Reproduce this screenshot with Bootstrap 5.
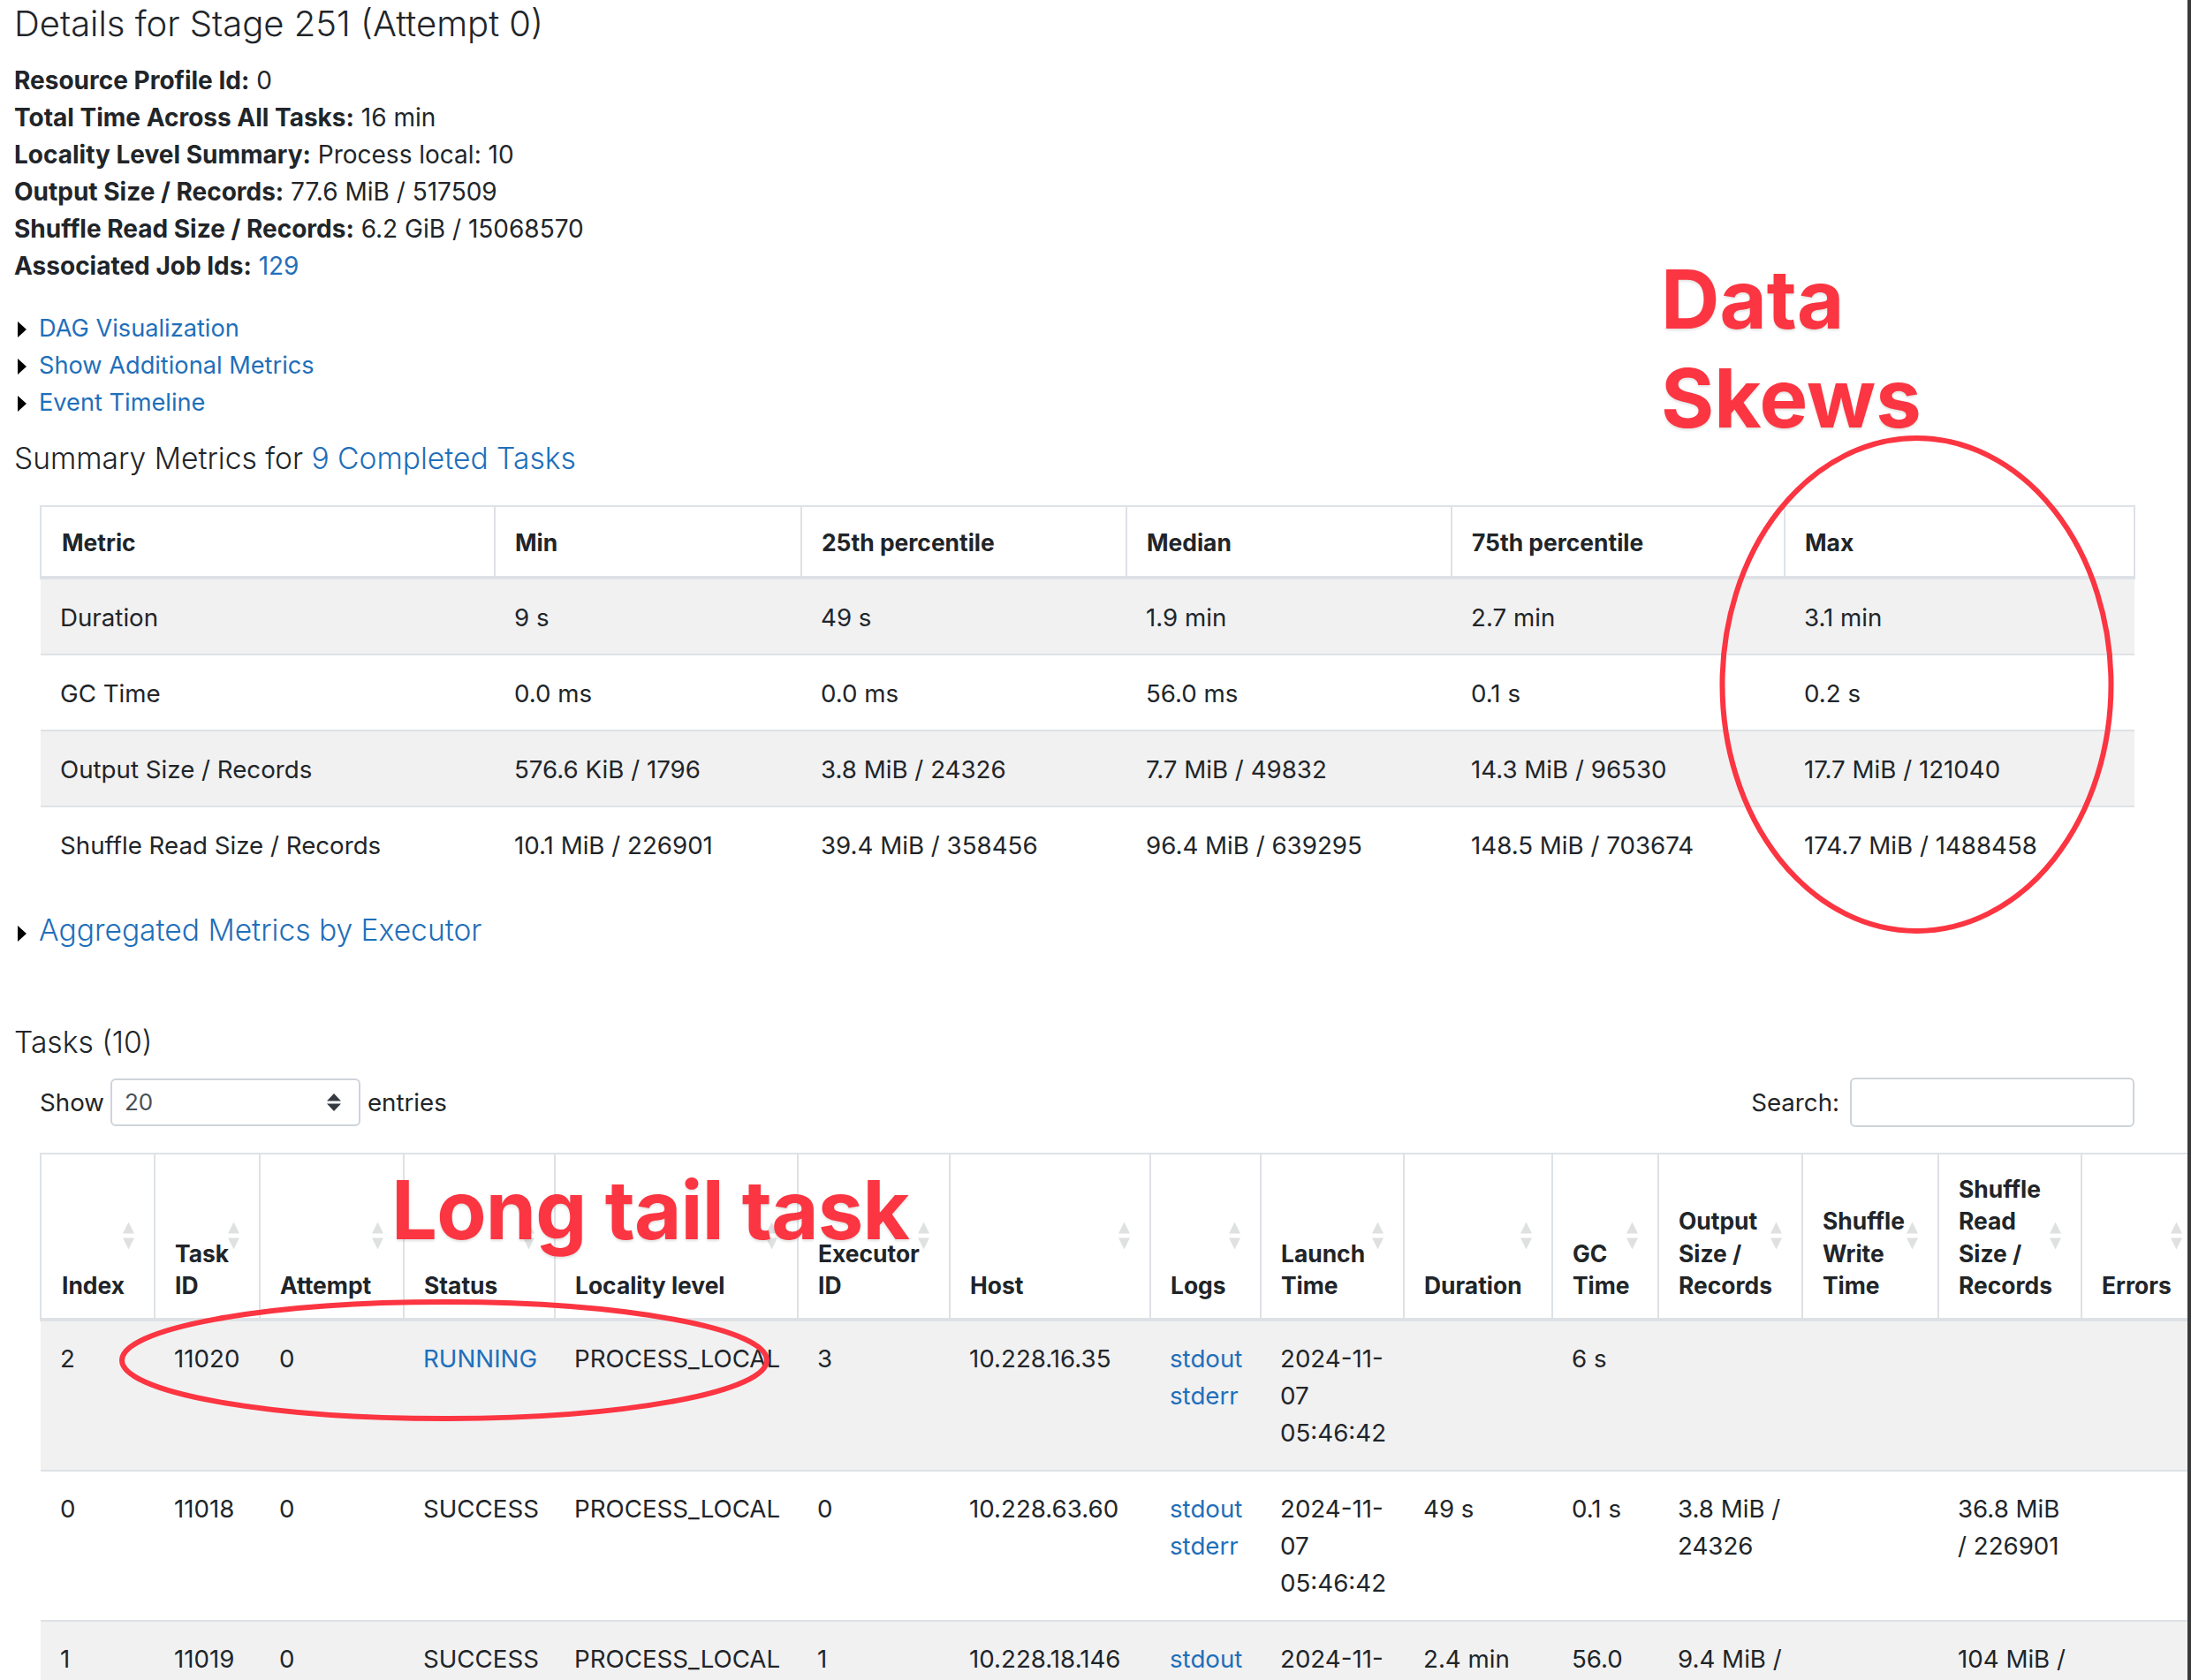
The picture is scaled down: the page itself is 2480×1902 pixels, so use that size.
<!DOCTYPE html>
<html lang="en">
<head>
<meta charset="utf-8">
<title>Details for Stage 251 (Attempt 0)</title>
<link href="https://cdn.jsdelivr.net/npm/bootstrap@5.3.0/dist/css/bootstrap.min.css" rel="stylesheet">
<style>
html{font-size:28px}
body{font-family:Inter,"Liberation Sans",sans-serif;color:#212529;overflow:hidden;height:1902px;width:2480px;position:relative;--bs-body-font-size:28px;font-size:28px;line-height:42px}
a{color:#1f6fba;text-decoration:none}
.page-wrap{padding:0 0 0 16px}
.stage-title{font-weight:300;font-size:40px;line-height:54px;margin:0 0 16px}
.stage-facts{list-style:none;padding:0;margin:0 0 29px}
.stage-facts strong{font-weight:700}
.stage-toggles{list-style:none;padding:0;margin:0 0 17px;font-size:27.2px}
.tri{display:inline-block;width:0;height:0;border-left:10px solid #000;border-top:9.5px solid transparent;border-bottom:9.5px solid transparent;margin:0 14px 0 4px;vertical-align:-1px}
.sub-head{font-weight:300;font-size:33.6px;line-height:50px;margin:0}
.agg-head{margin-top:30px}
.tasks-head{margin-top:77px}
.tbl-metrics{width:2369px;margin:27.5px 0 0 29px;table-layout:fixed}
.tbl-tasks{width:2447px;margin:0 0 0 29px;table-layout:fixed}
.tbl-metrics,.tbl-tasks{--bs-table-striped-bg:#f1f1f2;--bs-table-border-color:#dee2e6;border-collapse:collapse;margin-bottom:0;color:#212529;font-size:27.7px}
.table.tbl-metrics>thead>tr>th,.table.tbl-tasks>thead>tr>th{padding:22px 22px 20px;font-size:26.4px;line-height:36.4px;font-weight:700;border:2px solid #dee2e6;border-bottom:4px solid #dee2e6;vertical-align:bottom;position:relative;background:#fff;box-shadow:none}
.table.tbl-tasks>thead>tr>th{padding-top:21px;padding-bottom:18px}
.table.tbl-metrics>tbody>tr>td,.table.tbl-tasks>tbody>tr>td{padding:21px 22px 21px;line-height:42px;border:0;border-bottom:2px solid #dee2e6;vertical-align:top}
.table.tbl-metrics>tbody>tr>td{padding-top:22px;padding-bottom:20px}
.table.tbl-metrics>tbody>tr:last-child>td{border-bottom:0}
.table.tbl-metrics>thead>tr>th:first-child,.table.tbl-tasks>thead>tr>th:first-child{padding-left:23px}
.m1{width:514px}.m2{width:347px}.m3{width:368px}.m4{width:368px}.m5{width:377px}.m6{width:396px}
.t1{width:129px}.t2{width:119px}.t3{width:163px}.t4{width:171px}.t5{width:275px}.t6{width:172px}.t7{width:227px}.t8{width:125px}.t9{width:162px}.t10{width:168px}.t11{width:120px}.t12{width:163px}.t13{width:154px}.t14{width:162px}.t15{width:137px}
.sort-ico{position:absolute;right:22px;top:50%;width:13px;height:31px;transform:translateY(-50%);display:block}
.tasks-ctrl{padding:0 64px 0 29px;margin:15px 0 29px;height:56px;font-size:27.7px}
.len-select{width:283px;height:54px;font-size:26px;color:#495057;border:2px solid #ced4da;border-radius:6px;padding:4px 14px;margin:0 8px 0 7px;background-position:right 20px center;background-size:16px 20px;background-image:url("data:image/svg+xml,%3Csvg xmlns='http://www.w3.org/2000/svg' viewBox='0 0 16 20'%3E%3Cpath fill='%23343a40' d='M8 0l8 8.5H0zM8 20l-8-8.5h16z'/%3E%3C/svg%3E")}
.search-box{width:322px;height:56px;border:2px solid #ced4da;border-radius:6px;margin-left:12px}
.annot{position:absolute;color:#fb3541;font-weight:700;font-size:92px;line-height:112px;white-space:nowrap;text-shadow:0 2px 3px rgba(0,0,0,.12);pointer-events:none;z-index:3}
.annot-skew{left:1880px;top:283px}
.annot-tail{left:443px;top:1314px;letter-spacing:-.8px}
.annot-svg{position:absolute;left:0;top:0;z-index:2;pointer-events:none}
.page-edge{position:absolute;right:0;top:0;width:4px;height:1902px;background:#3a3a3a;z-index:4}
</style>
</head>
<body>
<div class="page-wrap">
  <h4 class="stage-title">Details for Stage 251 (Attempt 0)</h4>
  <ul class="stage-facts">
    <li><strong>Resource Profile Id:</strong> 0</li>
    <li><strong>Total Time Across All Tasks:</strong> 16 min</li>
    <li><strong>Locality Level Summary:</strong> Process local: 10</li>
    <li><strong>Output Size / Records:</strong> 77.6 MiB / 517509</li>
    <li><strong>Shuffle Read Size / Records:</strong> 6.2 GiB / 15068570</li>
    <li><strong>Associated Job Ids:</strong> <a href="#">129</a></li>
  </ul>
  <ul class="stage-toggles">
    <li><span class="tri"></span><a href="#">DAG Visualization</a></li>
    <li><span class="tri"></span><a href="#">Show Additional Metrics</a></li>
    <li><span class="tri"></span><a href="#">Event Timeline</a></li>
  </ul>
  <h4 class="sub-head">Summary Metrics for <a href="#">9 Completed Tasks</a></h4>
  <table class="table table-striped tbl-metrics">
    <thead><tr><th class="m1">Metric</th><th class="m2">Min</th><th class="m3">25th percentile</th><th class="m4">Median</th><th class="m5">75th percentile</th><th class="m6">Max</th></tr></thead>
    <tbody>
      <tr><td>Duration</td><td>9 s</td><td>49 s</td><td>1.9 min</td><td>2.7 min</td><td>3.1 min</td></tr>
      <tr><td>GC Time</td><td>0.0 ms</td><td>0.0 ms</td><td>56.0 ms</td><td>0.1 s</td><td>0.2 s</td></tr>
      <tr><td>Output Size / Records</td><td>576.6 KiB / 1796</td><td>3.8 MiB / 24326</td><td>7.7 MiB / 49832</td><td>14.3 MiB / 96530</td><td>17.7 MiB / 121040</td></tr>
      <tr><td>Shuffle Read Size / Records</td><td>10.1 MiB / 226901</td><td>39.4 MiB / 358456</td><td>96.4 MiB / 639295</td><td>148.5 MiB / 703674</td><td>174.7 MiB / 1488458</td></tr>
    </tbody>
  </table>
  <h4 class="sub-head agg-head"><span class="tri"></span><a href="#">Aggregated Metrics by Executor</a></h4>
  <h4 class="sub-head tasks-head">Tasks (10)</h4>
  <div class="tasks-ctrl d-flex justify-content-between align-items-center">
    <div class="d-flex align-items-center">Show<select class="form-select len-select"><option>20</option></select>entries</div>
    <div class="d-flex align-items-center">Search:<input class="form-control search-box" type="search"></div>
  </div>
  <table class="table table-striped tbl-tasks">
    <thead><tr>
      <th class="t1">Index<svg class="sort-ico" viewBox="0 0 13 31"><path fill="#dfe1e1" d="M6.5 0L13 13H0zM6.5 31L0 18h13z"/></svg></th>
      <th class="t2">Task ID<svg class="sort-ico" viewBox="0 0 13 31"><path fill="#dfe1e1" d="M6.5 0L13 13H0zM6.5 31L0 18h13z"/></svg></th>
      <th class="t3">Attempt<svg class="sort-ico" viewBox="0 0 13 31"><path fill="#dfe1e1" d="M6.5 0L13 13H0zM6.5 31L0 18h13z"/></svg></th>
      <th class="t4">Status<svg class="sort-ico" viewBox="0 0 13 31"><path fill="#dfe1e1" d="M6.5 0L13 13H0zM6.5 31L0 18h13z"/></svg></th>
      <th class="t5">Locality level<svg class="sort-ico" viewBox="0 0 13 31"><path fill="#dfe1e1" d="M6.5 0L13 13H0zM6.5 31L0 18h13z"/></svg></th>
      <th class="t6">Executor ID<svg class="sort-ico" viewBox="0 0 13 31"><path fill="#dfe1e1" d="M6.5 0L13 13H0zM6.5 31L0 18h13z"/></svg></th>
      <th class="t7">Host<svg class="sort-ico" viewBox="0 0 13 31"><path fill="#dfe1e1" d="M6.5 0L13 13H0zM6.5 31L0 18h13z"/></svg></th>
      <th class="t8">Logs<svg class="sort-ico" viewBox="0 0 13 31"><path fill="#dfe1e1" d="M6.5 0L13 13H0zM6.5 31L0 18h13z"/></svg></th>
      <th class="t9">Launch Time<svg class="sort-ico" viewBox="0 0 13 31"><path fill="#dfe1e1" d="M6.5 0L13 13H0zM6.5 31L0 18h13z"/></svg></th>
      <th class="t10">Duration<svg class="sort-ico" viewBox="0 0 13 31"><path fill="#dfe1e1" d="M6.5 0L13 13H0zM6.5 31L0 18h13z"/></svg></th>
      <th class="t11">GC Time<svg class="sort-ico" viewBox="0 0 13 31"><path fill="#dfe1e1" d="M6.5 0L13 13H0zM6.5 31L0 18h13z"/></svg></th>
      <th class="t12">Output Size / Records<svg class="sort-ico" viewBox="0 0 13 31"><path fill="#dfe1e1" d="M6.5 0L13 13H0zM6.5 31L0 18h13z"/></svg></th>
      <th class="t13">Shuffle Write Time<svg class="sort-ico" viewBox="0 0 13 31"><path fill="#dfe1e1" d="M6.5 0L13 13H0zM6.5 31L0 18h13z"/></svg></th>
      <th class="t14">Shuffle Read Size / Records<svg class="sort-ico" viewBox="0 0 13 31"><path fill="#dfe1e1" d="M6.5 0L13 13H0zM6.5 31L0 18h13z"/></svg></th>
      <th class="t15">Errors<svg class="sort-ico" viewBox="0 0 13 31"><path fill="#dfe1e1" d="M6.5 0L13 13H0zM6.5 31L0 18h13z"/></svg></th>
    </tr></thead>
    <tbody>
      <tr><td>2</td><td>11020</td><td>0</td><td><a href="#">RUNNING</a></td><td>PROCESS_LOCAL</td><td>3</td><td>10.228.16.35</td><td><a href="#">stdout</a><br><a href="#">stderr</a></td><td>2024-11-07 05:46:42</td><td></td><td>6 s</td><td></td><td></td><td></td><td></td></tr>
      <tr><td>0</td><td>11018</td><td>0</td><td>SUCCESS</td><td>PROCESS_LOCAL</td><td>0</td><td>10.228.63.60</td><td><a href="#">stdout</a><br><a href="#">stderr</a></td><td>2024-11-07 05:46:42</td><td>49 s</td><td>0.1 s</td><td>3.8 MiB / 24326</td><td></td><td>36.8 MiB / 226901</td><td></td></tr>
      <tr><td>1</td><td>11019</td><td>0</td><td>SUCCESS</td><td>PROCESS_LOCAL</td><td>1</td><td>10.228.18.146</td><td><a href="#">stdout</a><br><a href="#">stderr</a></td><td>2024-11-07 05:46:42</td><td>2.4 min</td><td>56.0 ms</td><td>9.4 MiB / 61020</td><td></td><td><span class="text-nowrap">104 MiB /</span> 358456</td><td></td></tr>
    </tbody>
  </table>
</div>
<div class="annot annot-skew">Data<br>Skews</div>
<div class="annot annot-tail">Long tail task</div>
<svg class="annot-svg" width="2480" height="1902" viewBox="0 0 2480 1902" fill="none" stroke="#fb3541" stroke-width="6">
  <ellipse cx="2169.5" cy="775" rx="220" ry="279"/>
  <ellipse cx="503" cy="1540" rx="365" ry="66"/>
</svg>
<div class="page-edge"></div>
</body>
</html>
